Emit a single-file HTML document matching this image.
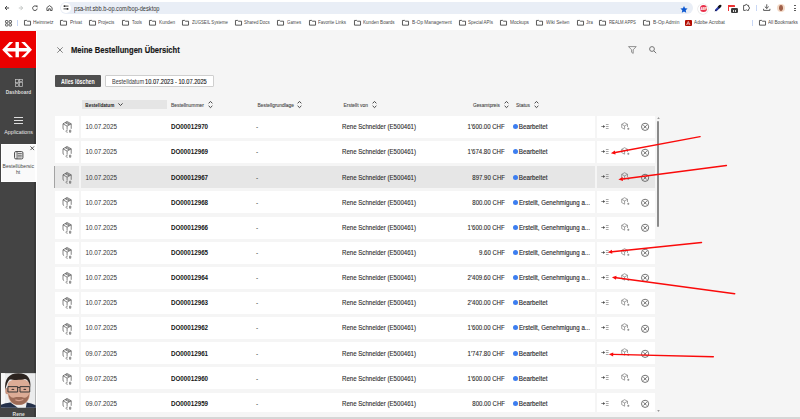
<!DOCTYPE html><html><head><meta charset="utf-8"><style>
*{margin:0;padding:0;box-sizing:border-box}
html,body{width:800px;height:419px;overflow:hidden;background:#fff;font-family:"Liberation Sans", sans-serif}
.a{position:absolute}
.t{position:absolute;white-space:nowrap;line-height:1}
svg{position:absolute;overflow:visible}
</style></head><body>
<div class="a" style="left:0;top:0;width:800px;height:30px;background:#fff"></div>
<svg style="left:4.4px;top:4.9px" width="6" height="6" viewBox="0 0 6 6"><path d="M5.1 3H1M3 1L1 3l2 2" fill="none" stroke="#474747" stroke-width="1"/></svg>
<svg style="left:18.2px;top:4.8px" width="6" height="6" viewBox="0 0 6 6"><path d="M0.8 3H4.6M2.6 0.9L4.7 3 2.6 5.1" fill="none" stroke="#c4c7c5" stroke-width="1"/></svg>
<svg style="left:32px;top:5px" width="6" height="6" viewBox="0 0 6 6"><path d="M5 2.2A2.3 2.3 0 1 0 5.2 3.6" fill="none" stroke="#474747" stroke-width="1"/><path d="M3.6 0.6h1.9v1.9z" fill="#474747"/></svg>
<svg style="left:46px;top:5px" width="7" height="6" viewBox="0 0 7 6"><path d="M0.9 2.6L3.5 0.6 6.1 2.6V5.5H4.3V3.8H2.7V5.5H0.9z" fill="none" stroke="#474747" stroke-width="0.9"/></svg>
<div class="a" style="left:59.7px;top:1.7px;width:633px;height:12.7px;border-radius:6.4px;background:#e9eef6"></div>
<div class="a" style="left:61.2px;top:3.2px;width:9.7px;height:9.7px;border-radius:50%;background:#fff"></div>
<svg style="left:63px;top:5.1px" width="6" height="5" viewBox="0 0 6 5"><path d="M1.8 1.1H5.5M0.5 3.9H4.2" stroke="#1f1f1f" stroke-width="0.8"/><circle cx="1.4" cy="1.1" r="0.9" fill="#1f1f1f"/><circle cx="4.6" cy="3.9" r="0.9" fill="#1f1f1f"/></svg>
<div class="t" style="left:73.8px;top:6px;font-size:6.3px;font-weight:normal;color:#333;transform:scaleX(0.898);transform-origin:0 0">psa-int.sbb.b-op.com/bop-desktop</div>
<svg style="left:679.5px;top:5.5px" width="8" height="7" viewBox="0 0 24 23"><path d="M12 0l3.5 7.6 8.3 0.9-6.2 5.6 1.7 8.2L12 18.1 4.7 22.3l1.7-8.2L0.2 8.5l8.3-0.9z" fill="#0b57d0"/></svg>
<div class="a" style="left:698.3px;top:3.6px;width:10px;height:10px;border-radius:50%;background:#fff;box-shadow:0 0 0 0.6px #e3e3e3"></div>
<div class="a" style="left:699.6px;top:4.9px;width:7.4px;height:7.4px;border-radius:50%;background:#e8304a"></div>
<div class="t" style="left:700.5px;top:8px;font-size:3.2px;font-weight:bold;color:#fff;letter-spacing:-0.1px">ABP</div>
<svg style="left:714px;top:4px" width="8" height="8" viewBox="0 0 8 8"><path d="M2 6.2L5.6 2.6" stroke="#22309a" stroke-width="2.2" stroke-linecap="round"/><path d="M5 3.2L6.3 1.9" stroke="#111" stroke-width="2.4" stroke-linecap="round"/><path d="M2.4 5.2L4.4 3.2" stroke="#5468d8" stroke-width="0.6"/><path d="M0.9 7.1L1.6 6.4" stroke="#111" stroke-width="0.9"/></svg>
<div class="a" style="left:728px;top:4.8px;width:7px;height:6.5px;background:#fff;border-left:1px solid #e33"></div>
<div class="a" style="left:728px;top:4.8px;width:7px;height:2.5px;background:#e33;border-radius:0.6px 0.6px 0 0"></div>
<div class="a" style="left:731px;top:8.3px;width:6.6px;height:5.2px;background:#3c3c3c;border-radius:1.2px"></div>
<div class="a" style="left:732.7px;top:9.5px;width:1.1px;height:2.8px;background:#ddd"></div><div class="a" style="left:734.9px;top:9.5px;width:1.1px;height:2.8px;background:#ddd"></div>
<svg style="left:742.5px;top:4.3px" width="7" height="7" viewBox="0 0 7 7"><path d="M0.6 1.4H2.3A1 1 0 0 1 4.3 1.4H5.6V3A1 1 0 0 1 5.6 5V6.4H4.2A1 1 0 0 0 2.4 6.4H0.6z" fill="none" stroke="#474747" stroke-width="0.9"/></svg>
<div class="a" style="left:755.7px;top:5px;width:0.8px;height:5.5px;background:#c8d7f5"></div>
<svg style="left:763px;top:4.3px" width="7.5" height="7" viewBox="0 0 7.5 7"><path d="M3.75 0.3V4.4M1.8 2.6l1.95 1.9 1.95-1.9M0.6 4.8V6.4H6.9V4.8" fill="none" stroke="#474747" stroke-width="0.9"/></svg>
<div class="a" style="left:777px;top:4px;width:8px;height:8px;border-radius:50%;background:#f3d9c6"></div>
<div class="a" style="left:779.2px;top:5px;width:3.8px;height:6px;border-radius:45%;background:#a0604a"></div>
<div class="a" style="left:794.4px;top:5px;width:1.2px;height:1.2px;background:#474747;border-radius:50%"></div><div class="a" style="left:794.4px;top:7.6px;width:1.2px;height:1.2px;background:#474747;border-radius:50%"></div><div class="a" style="left:794.4px;top:10.2px;width:1.2px;height:1.2px;background:#474747;border-radius:50%"></div>
<svg style="left:5px;top:19.6px" width="7" height="6.5" viewBox="0 0 7 6.5"><g fill="none" stroke="#474747" stroke-width="0.9"><rect x="0.5" y="0.5" width="2.4" height="2.3" rx="0.6"/><rect x="4.1" y="0.5" width="2.4" height="2.3" rx="0.6"/><rect x="0.5" y="3.7" width="2.4" height="2.3" rx="0.6"/><rect x="4.1" y="3.7" width="2.4" height="2.3" rx="0.6"/></g></svg>
<div class="a" style="left:17.2px;top:19.5px;width:0.8px;height:6px;background:#c8d7f5"></div>
<svg style="left:24px;top:20.2px" width="7" height="5.6" viewBox="0 0 7 5.6"><path d="M0.45 0.45H2.7L3.5 1.2H6.55V5.15H0.45z" fill="none" stroke="#474747" stroke-width="0.9" stroke-linejoin="round"/></svg>
<div class="t" style="left:33px;top:21px;font-size:4.9px;font-weight:normal;color:#4a4a4a;transform:scaleX(0.99);transform-origin:0 0">Heimnetz</div>
<svg style="left:60px;top:20.2px" width="7" height="5.6" viewBox="0 0 7 5.6"><path d="M0.45 0.45H2.7L3.5 1.2H6.55V5.15H0.45z" fill="none" stroke="#474747" stroke-width="0.9" stroke-linejoin="round"/></svg>
<div class="t" style="left:70px;top:21px;font-size:4.9px;font-weight:normal;color:#4a4a4a;transform:scaleX(0.957);transform-origin:0 0">Privat</div>
<svg style="left:89px;top:20.2px" width="7" height="5.6" viewBox="0 0 7 5.6"><path d="M0.45 0.45H2.7L3.5 1.2H6.55V5.15H0.45z" fill="none" stroke="#474747" stroke-width="0.9" stroke-linejoin="round"/></svg>
<div class="t" style="left:98px;top:21px;font-size:4.9px;font-weight:normal;color:#4a4a4a;transform:scaleX(0.927);transform-origin:0 0">Projects</div>
<svg style="left:122px;top:20.2px" width="7" height="5.6" viewBox="0 0 7 5.6"><path d="M0.45 0.45H2.7L3.5 1.2H6.55V5.15H0.45z" fill="none" stroke="#474747" stroke-width="0.9" stroke-linejoin="round"/></svg>
<div class="t" style="left:132px;top:21px;font-size:4.9px;font-weight:normal;color:#4a4a4a;transform:scaleX(0.873);transform-origin:0 0">Tools</div>
<svg style="left:149px;top:20.2px" width="7" height="5.6" viewBox="0 0 7 5.6"><path d="M0.45 0.45H2.7L3.5 1.2H6.55V5.15H0.45z" fill="none" stroke="#474747" stroke-width="0.9" stroke-linejoin="round"/></svg>
<div class="t" style="left:159px;top:21px;font-size:4.9px;font-weight:normal;color:#4a4a4a;transform:scaleX(0.961);transform-origin:0 0">Kunden</div>
<svg style="left:182px;top:20.2px" width="7" height="5.6" viewBox="0 0 7 5.6"><path d="M0.45 0.45H2.7L3.5 1.2H6.55V5.15H0.45z" fill="none" stroke="#474747" stroke-width="0.9" stroke-linejoin="round"/></svg>
<div class="t" style="left:191.5px;top:21px;font-size:4.9px;font-weight:normal;color:#4a4a4a;transform:scaleX(0.873);transform-origin:0 0">ZUGSEIL Systeme</div>
<svg style="left:235px;top:20.2px" width="7" height="5.6" viewBox="0 0 7 5.6"><path d="M0.45 0.45H2.7L3.5 1.2H6.55V5.15H0.45z" fill="none" stroke="#474747" stroke-width="0.9" stroke-linejoin="round"/></svg>
<div class="t" style="left:244.4px;top:21px;font-size:4.9px;font-weight:normal;color:#4a4a4a;transform:scaleX(0.912);transform-origin:0 0">Shared Docs</div>
<svg style="left:277px;top:20.2px" width="7" height="5.6" viewBox="0 0 7 5.6"><path d="M0.45 0.45H2.7L3.5 1.2H6.55V5.15H0.45z" fill="none" stroke="#474747" stroke-width="0.9" stroke-linejoin="round"/></svg>
<div class="t" style="left:286.9px;top:21px;font-size:4.9px;font-weight:normal;color:#4a4a4a;transform:scaleX(0.892);transform-origin:0 0">Games</div>
<svg style="left:309px;top:20.2px" width="7" height="5.6" viewBox="0 0 7 5.6"><path d="M0.45 0.45H2.7L3.5 1.2H6.55V5.15H0.45z" fill="none" stroke="#474747" stroke-width="0.9" stroke-linejoin="round"/></svg>
<div class="t" style="left:318.1px;top:21px;font-size:4.9px;font-weight:normal;color:#4a4a4a;transform:scaleX(0.922);transform-origin:0 0">Favorite Links</div>
<svg style="left:354px;top:20.2px" width="7" height="5.6" viewBox="0 0 7 5.6"><path d="M0.45 0.45H2.7L3.5 1.2H6.55V5.15H0.45z" fill="none" stroke="#474747" stroke-width="0.9" stroke-linejoin="round"/></svg>
<div class="t" style="left:363.1px;top:21px;font-size:4.9px;font-weight:normal;color:#4a4a4a;transform:scaleX(0.937);transform-origin:0 0">Kunden Boards</div>
<svg style="left:402px;top:20.2px" width="7" height="5.6" viewBox="0 0 7 5.6"><path d="M0.45 0.45H2.7L3.5 1.2H6.55V5.15H0.45z" fill="none" stroke="#474747" stroke-width="0.9" stroke-linejoin="round"/></svg>
<div class="t" style="left:411.5px;top:21px;font-size:4.9px;font-weight:normal;color:#4a4a4a;transform:scaleX(0.965);transform-origin:0 0">B-Op Management</div>
<svg style="left:459px;top:20.2px" width="7" height="5.6" viewBox="0 0 7 5.6"><path d="M0.45 0.45H2.7L3.5 1.2H6.55V5.15H0.45z" fill="none" stroke="#474747" stroke-width="0.9" stroke-linejoin="round"/></svg>
<div class="t" style="left:468px;top:21px;font-size:4.9px;font-weight:normal;color:#4a4a4a;transform:scaleX(0.912);transform-origin:0 0">Special APIs</div>
<svg style="left:500px;top:20.2px" width="7" height="5.6" viewBox="0 0 7 5.6"><path d="M0.45 0.45H2.7L3.5 1.2H6.55V5.15H0.45z" fill="none" stroke="#474747" stroke-width="0.9" stroke-linejoin="round"/></svg>
<div class="t" style="left:510px;top:21px;font-size:4.9px;font-weight:normal;color:#4a4a4a;transform:scaleX(0.969);transform-origin:0 0">Mockups</div>
<svg style="left:536px;top:20.2px" width="7" height="5.6" viewBox="0 0 7 5.6"><path d="M0.45 0.45H2.7L3.5 1.2H6.55V5.15H0.45z" fill="none" stroke="#474747" stroke-width="0.9" stroke-linejoin="round"/></svg>
<div class="t" style="left:545.5px;top:21px;font-size:4.9px;font-weight:normal;color:#4a4a4a;transform:scaleX(0.959);transform-origin:0 0">Wiki Seiten</div>
<svg style="left:577px;top:20.2px" width="7" height="5.6" viewBox="0 0 7 5.6"><path d="M0.45 0.45H2.7L3.5 1.2H6.55V5.15H0.45z" fill="none" stroke="#474747" stroke-width="0.9" stroke-linejoin="round"/></svg>
<div class="t" style="left:585.6px;top:21px;font-size:4.9px;font-weight:normal;color:#4a4a4a;transform:scaleX(0.873);transform-origin:0 0">Jira</div>
<svg style="left:599px;top:20.2px" width="7" height="5.6" viewBox="0 0 7 5.6"><path d="M0.45 0.45H2.7L3.5 1.2H6.55V5.15H0.45z" fill="none" stroke="#474747" stroke-width="0.9" stroke-linejoin="round"/></svg>
<div class="t" style="left:609px;top:21px;font-size:4.9px;font-weight:normal;color:#4a4a4a;transform:scaleX(0.869);transform-origin:0 0">REALM APPS</div>
<svg style="left:643px;top:20.2px" width="7" height="5.6" viewBox="0 0 7 5.6"><path d="M0.45 0.45H2.7L3.5 1.2H6.55V5.15H0.45z" fill="none" stroke="#474747" stroke-width="0.9" stroke-linejoin="round"/></svg>
<div class="t" style="left:652.5px;top:21px;font-size:4.9px;font-weight:normal;color:#4a4a4a;transform:scaleX(1.002);transform-origin:0 0">B-Op Admin</div>
<div class="a" style="left:685px;top:19.5px;width:6.5px;height:6.5px;background:#b30b00;border-radius:1px"></div>
<svg style="left:686px;top:20.5px" width="4.5" height="4.5" viewBox="0 0 5 5"><path d="M2.5 0.5L0.6 4.4M2.5 0.5L4.4 4.4M1.2 3.2H3.8" stroke="#fff" stroke-width="0.7" fill="none"/></svg>
<div class="t" style="left:694px;top:21px;font-size:4.9px;font-weight:normal;color:#4a4a4a;transform:scaleX(0.963);transform-origin:0 0">Adobe Acrobat</div>
<div class="a" style="left:752px;top:19.5px;width:0.8px;height:6px;background:#c8d7f5"></div>
<svg style="left:759px;top:20.2px" width="7" height="5.6" viewBox="0 0 7 5.6"><path d="M0.45 0.45H2.7L3.5 1.2H6.55V5.15H0.45z" fill="none" stroke="#474747" stroke-width="0.9" stroke-linejoin="round"/></svg>
<div class="t" style="left:768px;top:21px;font-size:4.9px;font-weight:normal;color:#4a4a4a;transform:scaleX(0.957);transform-origin:0 0">All Bookmarks</div>
<div class="a" style="left:0;top:30.3px;width:800px;height:389px;background:#f5f5f5"></div>
<div class="a" style="left:0;top:30.5px;width:37px;height:387px;background:#fff"></div>
<div class="a" style="left:0;top:30.5px;width:35.8px;height:37.8px;background:#eb0000"></div>
<div class="a" style="left:0;top:68.3px;width:35.8px;height:349px;background:#444"></div>
<div class="a" style="left:34px;top:68.3px;width:1.8px;height:349px;background:#3a3a3a"></div>
<svg style="left:0;top:0" width="36" height="60" viewBox="0 0 36 60"><path fill="#fff" d="M9.5 42H13.2L7.2 48H15.5V42H18.9V48H27.2L21.2 42H24.9L32 49.7 24.9 57.3H21.2L27.2 51.4H18.9V57.3H15.5V51.4H7.2L13.2 57.3H9.5L2.2 49.7z"/></svg>
<svg style="left:14.6px;top:79px" width="8" height="8" viewBox="0 0 8 8"><g fill="none" stroke="#c8c8c8" stroke-width="0.7"><rect x="0.5" y="0.5" width="3" height="3.2"/><rect x="4.5" y="0.5" width="3" height="1.8"/><rect x="0.5" y="4.7" width="3" height="2.8"/><rect x="4.5" y="3.3" width="3" height="4.2"/></g></svg>
<div class="t" style="left:5.8px;top:90.7px;font-size:4.8px;font-weight:bold;color:#dcdcdc;letter-spacing:0.05px">Dashboard</div>
<div class="a" style="left:13.8px;top:117.2px;width:9px;height:0.9px;background:#ddd"></div><div class="a" style="left:13.8px;top:119.9px;width:9px;height:0.9px;background:#ddd"></div><div class="a" style="left:13.8px;top:122.6px;width:9px;height:0.9px;background:#ddd"></div>
<div class="t" style="left:4.3px;top:130px;font-size:5.3px;color:#e8e8e8">Applications</div>
<div class="a" style="left:1px;top:143.8px;width:34.8px;height:38px;background:#fafafa;border:1.5px solid #fff"></div>
<svg style="left:30px;top:146px" width="4.5" height="4.5" viewBox="0 0 4.5 4.5"><path d="M0.4 0.4l3.7 3.7M4.1 0.4L0.4 4.1" stroke="#333" stroke-width="0.8"/></svg>
<svg style="left:14px;top:151px" width="9.5" height="8.5" viewBox="0 0 9.5 8.5"><rect x="0.6" y="0.6" width="8.3" height="7.3" rx="1.2" fill="none" stroke="#444" stroke-width="1"/><path d="M3 0.6V7.9M3.6 2.6h4.2M3.6 4.25h4.2M3.6 5.9h4.2" stroke="#444" stroke-width="0.8"/></svg>
<div class="t" style="left:2.6px;top:163.7px;font-size:5.05px;color:#444">Bestellübersic</div>
<div class="t" style="left:16px;top:170.3px;font-size:5.05px;color:#444">ht</div>
<svg style="left:1px;top:373.4px" width="34.7" height="35" viewBox="0 0 35 35">
<rect width="35" height="35" fill="#ebeced"/>
<rect width="4" height="35" fill="#f7f7f7"/>
<path d="M0 35V32C3 30.5 6 30 9 29.5L26 29.5C29 30 32 31 35 32.5V35z" fill="#25314a"/>
<path d="M9.5 29.5L17 35 25 35 26 29.5z" fill="#eeeeee"/>
<ellipse cx="6.2" cy="18" rx="1.9" ry="3.2" fill="#c9947e"/>
<path d="M6.8 12C6.8 4 29.2 4 29.2 12V20C29.2 28 24.5 32 18 32C11.5 32 6.8 28 6.8 20z" fill="#dcac96"/>
<path d="M4.4 17C3 6 8 0 17.5 0C27 0 30.5 5 29.6 14.5C28.6 9 27 6.6 24 6C20 7.2 12 7 8.8 6.4C7 8 5.5 11.5 4.4 17z" fill="#2c2420"/>
<path d="M7.5 20C7.8 28 12 32 18 32C24 32 28.3 28 28.6 20C27.6 24 25 25.3 22.5 24.6C20.5 24 15.5 24 13.5 24.6C11 25.3 8.6 24 7.5 20z" fill="#9c6b57"/>
<path d="M14.5 26.8C16.5 27.8 20 27.8 22.5 26.6" stroke="#d7a291" stroke-width="1.2" fill="none"/>
<path d="M7 13.6H16.8V19H7zM19.2 13.6H29V19H19.2zM16.8 14.4H19.2" fill="none" stroke="#353535" stroke-width="1" stroke-linejoin="round"/>
<ellipse cx="12" cy="16.4" rx="1.5" ry="0.7" fill="#4a3a34"/><ellipse cx="24" cy="16.4" rx="1.5" ry="0.7" fill="#4a3a34"/>
</svg>
<div class="t" style="left:12.6px;top:411.6px;font-size:5px;font-weight:bold;color:#ddd">Rene</div>
<div class="a" style="left:0;top:417px;width:800px;height:2px;background:#d6d6d6"></div>
<svg style="left:56.5px;top:47px" width="6" height="6" viewBox="0 0 6 6"><path d="M0.3 0.3l5.4 5.4M5.7 0.3L0.3 5.7" stroke="#666" stroke-width="0.8"/></svg>
<div class="t" style="left:70.6px;top:45.7px;font-size:8.3px;font-weight:bold;color:#151515;-webkit-text-stroke:0.15px #151515;transform:scaleX(0.918);transform-origin:0 0">Meine Bestellungen Übersicht</div>
<svg style="left:628.4px;top:46px" width="9" height="8" viewBox="0 0 9 8"><path d="M0.5 0.6H8.2L5.2 3.8V7.4L3.6 6.3V3.8z" fill="none" stroke="#777" stroke-width="0.8" stroke-linejoin="round"/></svg>
<svg style="left:649px;top:46px" width="8" height="8" viewBox="0 0 8 8"><circle cx="3" cy="3" r="2.4" fill="none" stroke="#666" stroke-width="0.9"/><path d="M4.8 4.8L7.2 7.2" stroke="#666" stroke-width="0.9"/></svg>
<div class="a" style="left:55px;top:75px;width:46px;height:12.2px;background:#4f4f4f;border-radius:1px"></div>
<div class="t" style="left:61px;top:79px;font-size:6.3px;font-weight:bold;color:#fff;transform:scaleX(0.83);transform-origin:0 0">Alles löschen</div>
<div class="a" style="left:104.5px;top:74.6px;width:109.4px;height:12.9px;background:#fff;border:0.7px solid #cfcfcf;border-radius:1px"></div>
<div class="t" style="left:111.5px;top:79px;font-size:6.3px;font-weight:normal;color:#3a3a3a;transform:scaleX(0.88);transform-origin:0 0">Bestelldatum</div>
<div class="t" style="left:145.2px;top:79px;font-size:6.3px;font-weight:normal;color:#1a1a1a;transform:scaleX(0.9);transform-origin:0 0;-webkit-text-stroke:0.12px #1a1a1a">10.07.2023 - 10.07.2025</div>
<div class="a" style="left:82.2px;top:100px;width:84.5px;height:9.4px;background:#e5e5e5"></div>
<div class="t" style="left:85.3px;top:103.6px;font-size:4.62px;font-weight:bold;color:#222">Bestelldatum</div>
<svg style="left:118.2px;top:103.2px" width="5" height="3" viewBox="0 0 5 3"><path d="M0.4 0.4L2.5 2.5 4.6 0.4" fill="none" stroke="#333" stroke-width="0.9"/></svg>
<div class="t" style="left:171px;top:103.9px;font-size:4.95px;color:#444;-webkit-text-stroke:0.08px #444">Bestellnummer</div>
<svg style="left:208.2px;top:101.4px" width="5" height="7" viewBox="0 0 5 7"><path d="M0.6 2.3L2.5 0.5 4.4 2.3M0.6 4.8L2.5 6.6 4.4 4.8" fill="none" stroke="#333" stroke-width="0.9"/></svg>
<div class="t" style="left:257.5px;top:103.9px;font-size:4.9px;color:#444;-webkit-text-stroke:0.08px #444">Bestellgrundlage</div>
<svg style="left:297.2px;top:101.4px" width="5" height="7" viewBox="0 0 5 7"><path d="M0.6 2.3L2.5 0.5 4.4 2.3M0.6 4.8L2.5 6.6 4.4 4.8" fill="none" stroke="#333" stroke-width="0.9"/></svg>
<div class="t" style="left:343.5px;top:103.9px;font-size:4.95px;color:#444;-webkit-text-stroke:0.08px #444">Erstellt von</div>
<svg style="left:371.7px;top:101.4px" width="5" height="7" viewBox="0 0 5 7"><path d="M0.6 2.3L2.5 0.5 4.4 2.3M0.6 4.8L2.5 6.6 4.4 4.8" fill="none" stroke="#333" stroke-width="0.9"/></svg>
<div class="t" style="left:473px;top:103.9px;font-size:4.76px;color:#444;-webkit-text-stroke:0.08px #444">Gesamtpreis</div>
<svg style="left:503.9px;top:101.4px" width="5" height="7" viewBox="0 0 5 7"><path d="M0.6 2.3L2.5 0.5 4.4 2.3M0.6 4.8L2.5 6.6 4.4 4.8" fill="none" stroke="#333" stroke-width="0.9"/></svg>
<div class="t" style="left:516px;top:103.9px;font-size:4.94px;color:#444;-webkit-text-stroke:0.08px #444">Status</div>
<svg style="left:533.9000000000001px;top:101.4px" width="5" height="7" viewBox="0 0 5 7"><path d="M0.6 2.3L2.5 0.5 4.4 2.3M0.6 4.8L2.5 6.6 4.4 4.8" fill="none" stroke="#333" stroke-width="0.9"/></svg>
<div class="a" style="left:55.3px;top:115.90px;width:23.8px;height:22.0px;background:#fff"></div>
<div class="a" style="left:81px;top:115.90px;width:513.6px;height:22.0px;background:#fff"></div>
<div class="a" style="left:596.9px;top:115.90px;width:57.9px;height:22.0px;background:#fff"></div>
<svg style="left:62px;top:121.30px" width="10.5" height="12.5" viewBox="0 0 10.5 12.5"><path d="M5.1 0.5L9.2 2.8V7.8M5.1 0.5L1 2.8V7.8L2.1 8.6M1 2.8L5.1 5.1 9.2 2.8M5.1 5.1V8.4M3.05 1.65L7.15 3.95M4.1 1.05L8.2 3.35" fill="none" stroke="#4d4d4d" stroke-width="0.7" stroke-linejoin="round"/><path d="M5.8 9.3A1.05 1.2 0 1 0 5.8 11.1" fill="none" stroke="#555" stroke-width="0.6"/><path d="M7.6 9V11.4H8.4A0.62 0.6 0 0 0 8.4 10.2H7.6M7.6 10.2H8.3A0.6 0.6 0 0 0 8.3 9H7.6" fill="none" stroke="#555" stroke-width="0.55"/></svg>
<div class="t" style="left:85.6px;top:124px;font-size:6.3px;font-weight:normal;color:#333">10.07.2025</div>
<div class="t" style="left:170.9px;top:124px;font-size:6.3px;font-weight:bold;color:#151515;transform:scaleX(0.99);transform-origin:0 0">DO00012970</div>
<div class="t" style="left:256px;top:124px;font-size:6.5px;font-weight:normal;color:#333">-</div>
<div class="t" style="left:342px;top:124px;font-size:6.3px;font-weight:normal;color:#2b2b2b;transform:scaleX(0.97);transform-origin:0 0;-webkit-text-stroke:0.1px #2b2b2b">Rene Schneider (E500461)</div>
<div class="t" style="right:295.5px;top:124px;font-size:6.3px;font-weight:normal;color:#2b2b2b;transform:scaleX(0.96);transform-origin:100% 0;-webkit-text-stroke:0.1px #2b2b2b">1'600.00 CHF</div>
<div class="a" style="left:512.5px;top:124.25px;width:5px;height:5px;border-radius:50%;background:#3d7ef0"></div>
<div class="t" style="left:518.8px;top:124px;font-size:6.3px;font-weight:normal;color:#2b2b2b;-webkit-text-stroke:0.13px #2b2b2b">Bearbeitet</div>
<svg style="left:601.3px;top:123px" width="8" height="7" viewBox="0 0 8 7"><path d="M0.3 3.5H3" fill="none" stroke="#555" stroke-width="0.7"/><path d="M2.2 2.1L4.1 3.5 2.2 4.9z" fill="#444"/><path d="M4.9 1.5H7.6M4.9 3.5H7.6M4.9 5.5H7.6" stroke="#7a7a7a" stroke-width="0.65"/></svg>
<svg style="left:620.5px;top:121.90px" width="9" height="8.5" viewBox="0 0 9 8.5"><path d="M3.6 0.7L6.5 2.3V5M3.6 0.7L0.7 2.3V5.6L3.6 7.2M0.7 2.3L3.6 3.9 6.5 2.3M3.6 3.9V7.2" fill="none" stroke="#666" stroke-width="0.6" stroke-linejoin="round"/><path d="M7.3 5.7V7.9M6.2 6.8H8.4" stroke="#666" stroke-width="0.6"/></svg>
<svg style="left:641.3px;top:123.40px" width="8.2" height="7.7" viewBox="0 0 8.2 7.7"><circle cx="4.1" cy="3.85" r="3.6" fill="none" stroke="#444" stroke-width="0.75"/><path d="M2.4 2.15L5.8 5.55M5.8 2.15L2.4 5.55" stroke="#444" stroke-width="0.75"/></svg>
<div class="a" style="left:55.3px;top:141.05px;width:23.8px;height:22.0px;background:#fff"></div>
<div class="a" style="left:81px;top:141.05px;width:513.6px;height:22.0px;background:#fff"></div>
<div class="a" style="left:596.9px;top:141.05px;width:57.9px;height:22.0px;background:#fff"></div>
<svg style="left:62px;top:146.45px" width="10.5" height="12.5" viewBox="0 0 10.5 12.5"><path d="M5.1 0.5L9.2 2.8V7.8M5.1 0.5L1 2.8V7.8L2.1 8.6M1 2.8L5.1 5.1 9.2 2.8M5.1 5.1V8.4M3.05 1.65L7.15 3.95M4.1 1.05L8.2 3.35" fill="none" stroke="#4d4d4d" stroke-width="0.7" stroke-linejoin="round"/><path d="M5.8 9.3A1.05 1.2 0 1 0 5.8 11.1" fill="none" stroke="#555" stroke-width="0.6"/><path d="M7.6 9V11.4H8.4A0.62 0.6 0 0 0 8.4 10.2H7.6M7.6 10.2H8.3A0.6 0.6 0 0 0 8.3 9H7.6" fill="none" stroke="#555" stroke-width="0.55"/></svg>
<div class="t" style="left:85.6px;top:149px;font-size:6.3px;font-weight:normal;color:#333">10.07.2025</div>
<div class="t" style="left:170.9px;top:149px;font-size:6.3px;font-weight:bold;color:#151515;transform:scaleX(0.99);transform-origin:0 0">DO00012969</div>
<div class="t" style="left:256px;top:149px;font-size:6.5px;font-weight:normal;color:#333">-</div>
<div class="t" style="left:342px;top:149px;font-size:6.3px;font-weight:normal;color:#2b2b2b;transform:scaleX(0.97);transform-origin:0 0;-webkit-text-stroke:0.1px #2b2b2b">Rene Schneider (E500461)</div>
<div class="t" style="right:295.5px;top:149px;font-size:6.3px;font-weight:normal;color:#2b2b2b;transform:scaleX(0.96);transform-origin:100% 0;-webkit-text-stroke:0.1px #2b2b2b">1'674.80 CHF</div>
<div class="a" style="left:512.5px;top:149.40px;width:5px;height:5px;border-radius:50%;background:#3d7ef0"></div>
<div class="t" style="left:518.8px;top:149px;font-size:6.3px;font-weight:normal;color:#2b2b2b;-webkit-text-stroke:0.13px #2b2b2b">Bearbeitet</div>
<svg style="left:601.3px;top:148px" width="8" height="7" viewBox="0 0 8 7"><path d="M0.3 3.5H3" fill="none" stroke="#555" stroke-width="0.7"/><path d="M2.2 2.1L4.1 3.5 2.2 4.9z" fill="#444"/><path d="M4.9 1.5H7.6M4.9 3.5H7.6M4.9 5.5H7.6" stroke="#7a7a7a" stroke-width="0.65"/></svg>
<svg style="left:620.5px;top:147.05px" width="9" height="8.5" viewBox="0 0 9 8.5"><path d="M3.6 0.7L6.5 2.3V5M3.6 0.7L0.7 2.3V5.6L3.6 7.2M0.7 2.3L3.6 3.9 6.5 2.3M3.6 3.9V7.2" fill="none" stroke="#666" stroke-width="0.6" stroke-linejoin="round"/><path d="M7.3 5.7V7.9M6.2 6.8H8.4" stroke="#666" stroke-width="0.6"/></svg>
<svg style="left:641.3px;top:148.55px" width="8.2" height="7.7" viewBox="0 0 8.2 7.7"><circle cx="4.1" cy="3.85" r="3.6" fill="none" stroke="#444" stroke-width="0.75"/><path d="M2.4 2.15L5.8 5.55M5.8 2.15L2.4 5.55" stroke="#444" stroke-width="0.75"/></svg>
<div class="a" style="left:54px;top:166.20px;width:1.4px;height:22.0px;background:#a3a3a3"></div>
<div class="a" style="left:55.3px;top:166.20px;width:23.8px;height:22.0px;background:#e6e6e6"></div>
<div class="a" style="left:81px;top:166.20px;width:513.6px;height:22.0px;background:#e6e6e6"></div>
<div class="a" style="left:596.9px;top:166.20px;width:57.9px;height:22.0px;background:#e6e6e6"></div>
<svg style="left:62px;top:171.60px" width="10.5" height="12.5" viewBox="0 0 10.5 12.5"><path d="M5.1 0.5L9.2 2.8V7.8M5.1 0.5L1 2.8V7.8L2.1 8.6M1 2.8L5.1 5.1 9.2 2.8M5.1 5.1V8.4M3.05 1.65L7.15 3.95M4.1 1.05L8.2 3.35" fill="none" stroke="#4d4d4d" stroke-width="0.7" stroke-linejoin="round"/><path d="M5.8 9.3A1.05 1.2 0 1 0 5.8 11.1" fill="none" stroke="#555" stroke-width="0.6"/><path d="M7.6 9V11.4H8.4A0.62 0.6 0 0 0 8.4 10.2H7.6M7.6 10.2H8.3A0.6 0.6 0 0 0 8.3 9H7.6" fill="none" stroke="#555" stroke-width="0.55"/></svg>
<div class="t" style="left:85.6px;top:175px;font-size:6.3px;font-weight:normal;color:#333">10.07.2025</div>
<div class="t" style="left:170.9px;top:175px;font-size:6.3px;font-weight:bold;color:#151515;transform:scaleX(0.99);transform-origin:0 0">DO00012967</div>
<div class="t" style="left:256px;top:175px;font-size:6.5px;font-weight:normal;color:#333">-</div>
<div class="t" style="left:342px;top:175px;font-size:6.3px;font-weight:normal;color:#2b2b2b;transform:scaleX(0.97);transform-origin:0 0;-webkit-text-stroke:0.1px #2b2b2b">Rene Schneider (E500461)</div>
<div class="t" style="right:295.5px;top:175px;font-size:6.3px;font-weight:normal;color:#2b2b2b;transform:scaleX(0.96);transform-origin:100% 0;-webkit-text-stroke:0.1px #2b2b2b">897.90 CHF</div>
<div class="a" style="left:512.5px;top:174.55px;width:5px;height:5px;border-radius:50%;background:#3d7ef0"></div>
<div class="t" style="left:518.8px;top:175px;font-size:6.3px;font-weight:normal;color:#2b2b2b;-webkit-text-stroke:0.13px #2b2b2b">Bearbeitet</div>
<svg style="left:601.3px;top:173px" width="8" height="7" viewBox="0 0 8 7"><path d="M0.3 3.5H3" fill="none" stroke="#555" stroke-width="0.7"/><path d="M2.2 2.1L4.1 3.5 2.2 4.9z" fill="#444"/><path d="M4.9 1.5H7.6M4.9 3.5H7.6M4.9 5.5H7.6" stroke="#7a7a7a" stroke-width="0.65"/></svg>
<svg style="left:620.5px;top:172.20px" width="9" height="8.5" viewBox="0 0 9 8.5"><path d="M3.6 0.7L6.5 2.3V5M3.6 0.7L0.7 2.3V5.6L3.6 7.2M0.7 2.3L3.6 3.9 6.5 2.3M3.6 3.9V7.2" fill="none" stroke="#666" stroke-width="0.6" stroke-linejoin="round"/><path d="M7.3 5.7V7.9M6.2 6.8H8.4" stroke="#666" stroke-width="0.6"/></svg>
<svg style="left:641.3px;top:173.70px" width="8.2" height="7.7" viewBox="0 0 8.2 7.7"><circle cx="4.1" cy="3.85" r="3.6" fill="none" stroke="#444" stroke-width="0.75"/><path d="M2.4 2.15L5.8 5.55M5.8 2.15L2.4 5.55" stroke="#444" stroke-width="0.75"/></svg>
<div class="a" style="left:55.3px;top:191.35px;width:23.8px;height:22.0px;background:#fff"></div>
<div class="a" style="left:81px;top:191.35px;width:513.6px;height:22.0px;background:#fff"></div>
<div class="a" style="left:596.9px;top:191.35px;width:57.9px;height:22.0px;background:#fff"></div>
<svg style="left:62px;top:196.75px" width="10.5" height="12.5" viewBox="0 0 10.5 12.5"><path d="M5.1 0.5L9.2 2.8V7.8M5.1 0.5L1 2.8V7.8L2.1 8.6M1 2.8L5.1 5.1 9.2 2.8M5.1 5.1V8.4M3.05 1.65L7.15 3.95M4.1 1.05L8.2 3.35" fill="none" stroke="#4d4d4d" stroke-width="0.7" stroke-linejoin="round"/><path d="M5.8 9.3A1.05 1.2 0 1 0 5.8 11.1" fill="none" stroke="#555" stroke-width="0.6"/><path d="M7.6 9V11.4H8.4A0.62 0.6 0 0 0 8.4 10.2H7.6M7.6 10.2H8.3A0.6 0.6 0 0 0 8.3 9H7.6" fill="none" stroke="#555" stroke-width="0.55"/></svg>
<div class="t" style="left:85.6px;top:200px;font-size:6.3px;font-weight:normal;color:#333">10.07.2025</div>
<div class="t" style="left:170.9px;top:200px;font-size:6.3px;font-weight:bold;color:#151515;transform:scaleX(0.99);transform-origin:0 0">DO00012968</div>
<div class="t" style="left:256px;top:200px;font-size:6.5px;font-weight:normal;color:#333">-</div>
<div class="t" style="left:342px;top:200px;font-size:6.3px;font-weight:normal;color:#2b2b2b;transform:scaleX(0.97);transform-origin:0 0;-webkit-text-stroke:0.1px #2b2b2b">Rene Schneider (E500461)</div>
<div class="t" style="right:295.5px;top:200px;font-size:6.3px;font-weight:normal;color:#2b2b2b;transform:scaleX(0.96);transform-origin:100% 0;-webkit-text-stroke:0.1px #2b2b2b">800.00 CHF</div>
<div class="a" style="left:512.5px;top:199.70px;width:5px;height:5px;border-radius:50%;background:#3d7ef0"></div>
<div class="t" style="left:518.8px;top:200px;font-size:6.3px;font-weight:normal;color:#2b2b2b;transform:scaleX(0.974);transform-origin:0 0;-webkit-text-stroke:0.13px #2b2b2b">Erstellt, Genehmigung a...</div>
<svg style="left:601.3px;top:198px" width="8" height="7" viewBox="0 0 8 7"><path d="M0.3 3.5H3" fill="none" stroke="#555" stroke-width="0.7"/><path d="M2.2 2.1L4.1 3.5 2.2 4.9z" fill="#444"/><path d="M4.9 1.5H7.6M4.9 3.5H7.6M4.9 5.5H7.6" stroke="#7a7a7a" stroke-width="0.65"/></svg>
<svg style="left:620.5px;top:197.35px" width="9" height="8.5" viewBox="0 0 9 8.5"><path d="M3.6 0.7L6.5 2.3V5M3.6 0.7L0.7 2.3V5.6L3.6 7.2M0.7 2.3L3.6 3.9 6.5 2.3M3.6 3.9V7.2" fill="none" stroke="#666" stroke-width="0.6" stroke-linejoin="round"/><path d="M7.3 5.7V7.9M6.2 6.8H8.4" stroke="#666" stroke-width="0.6"/></svg>
<svg style="left:641.3px;top:198.85px" width="8.2" height="7.7" viewBox="0 0 8.2 7.7"><circle cx="4.1" cy="3.85" r="3.6" fill="none" stroke="#444" stroke-width="0.75"/><path d="M2.4 2.15L5.8 5.55M5.8 2.15L2.4 5.55" stroke="#444" stroke-width="0.75"/></svg>
<div class="a" style="left:55.3px;top:216.50px;width:23.8px;height:22.0px;background:#fff"></div>
<div class="a" style="left:81px;top:216.50px;width:513.6px;height:22.0px;background:#fff"></div>
<div class="a" style="left:596.9px;top:216.50px;width:57.9px;height:22.0px;background:#fff"></div>
<svg style="left:62px;top:221.90px" width="10.5" height="12.5" viewBox="0 0 10.5 12.5"><path d="M5.1 0.5L9.2 2.8V7.8M5.1 0.5L1 2.8V7.8L2.1 8.6M1 2.8L5.1 5.1 9.2 2.8M5.1 5.1V8.4M3.05 1.65L7.15 3.95M4.1 1.05L8.2 3.35" fill="none" stroke="#4d4d4d" stroke-width="0.7" stroke-linejoin="round"/><path d="M5.8 9.3A1.05 1.2 0 1 0 5.8 11.1" fill="none" stroke="#555" stroke-width="0.6"/><path d="M7.6 9V11.4H8.4A0.62 0.6 0 0 0 8.4 10.2H7.6M7.6 10.2H8.3A0.6 0.6 0 0 0 8.3 9H7.6" fill="none" stroke="#555" stroke-width="0.55"/></svg>
<div class="t" style="left:85.6px;top:225px;font-size:6.3px;font-weight:normal;color:#333">10.07.2025</div>
<div class="t" style="left:170.9px;top:225px;font-size:6.3px;font-weight:bold;color:#151515;transform:scaleX(0.99);transform-origin:0 0">DO00012966</div>
<div class="t" style="left:256px;top:225px;font-size:6.5px;font-weight:normal;color:#333">-</div>
<div class="t" style="left:342px;top:225px;font-size:6.3px;font-weight:normal;color:#2b2b2b;transform:scaleX(0.97);transform-origin:0 0;-webkit-text-stroke:0.1px #2b2b2b">Rene Schneider (E500461)</div>
<div class="t" style="right:295.5px;top:225px;font-size:6.3px;font-weight:normal;color:#2b2b2b;transform:scaleX(0.96);transform-origin:100% 0;-webkit-text-stroke:0.1px #2b2b2b">1'600.00 CHF</div>
<div class="a" style="left:512.5px;top:224.85px;width:5px;height:5px;border-radius:50%;background:#3d7ef0"></div>
<div class="t" style="left:518.8px;top:225px;font-size:6.3px;font-weight:normal;color:#2b2b2b;transform:scaleX(0.974);transform-origin:0 0;-webkit-text-stroke:0.13px #2b2b2b">Erstellt, Genehmigung a...</div>
<svg style="left:601.3px;top:224px" width="8" height="7" viewBox="0 0 8 7"><path d="M0.3 3.5H3" fill="none" stroke="#555" stroke-width="0.7"/><path d="M2.2 2.1L4.1 3.5 2.2 4.9z" fill="#444"/><path d="M4.9 1.5H7.6M4.9 3.5H7.6M4.9 5.5H7.6" stroke="#7a7a7a" stroke-width="0.65"/></svg>
<svg style="left:620.5px;top:222.50px" width="9" height="8.5" viewBox="0 0 9 8.5"><path d="M3.6 0.7L6.5 2.3V5M3.6 0.7L0.7 2.3V5.6L3.6 7.2M0.7 2.3L3.6 3.9 6.5 2.3M3.6 3.9V7.2" fill="none" stroke="#666" stroke-width="0.6" stroke-linejoin="round"/><path d="M7.3 5.7V7.9M6.2 6.8H8.4" stroke="#666" stroke-width="0.6"/></svg>
<svg style="left:641.3px;top:224.00px" width="8.2" height="7.7" viewBox="0 0 8.2 7.7"><circle cx="4.1" cy="3.85" r="3.6" fill="none" stroke="#444" stroke-width="0.75"/><path d="M2.4 2.15L5.8 5.55M5.8 2.15L2.4 5.55" stroke="#444" stroke-width="0.75"/></svg>
<div class="a" style="left:55.3px;top:241.65px;width:23.8px;height:22.0px;background:#fff"></div>
<div class="a" style="left:81px;top:241.65px;width:513.6px;height:22.0px;background:#fff"></div>
<div class="a" style="left:596.9px;top:241.65px;width:57.9px;height:22.0px;background:#fff"></div>
<svg style="left:62px;top:247.05px" width="10.5" height="12.5" viewBox="0 0 10.5 12.5"><path d="M5.1 0.5L9.2 2.8V7.8M5.1 0.5L1 2.8V7.8L2.1 8.6M1 2.8L5.1 5.1 9.2 2.8M5.1 5.1V8.4M3.05 1.65L7.15 3.95M4.1 1.05L8.2 3.35" fill="none" stroke="#4d4d4d" stroke-width="0.7" stroke-linejoin="round"/><path d="M5.8 9.3A1.05 1.2 0 1 0 5.8 11.1" fill="none" stroke="#555" stroke-width="0.6"/><path d="M7.6 9V11.4H8.4A0.62 0.6 0 0 0 8.4 10.2H7.6M7.6 10.2H8.3A0.6 0.6 0 0 0 8.3 9H7.6" fill="none" stroke="#555" stroke-width="0.55"/></svg>
<div class="t" style="left:85.6px;top:250px;font-size:6.3px;font-weight:normal;color:#333">10.07.2025</div>
<div class="t" style="left:170.9px;top:250px;font-size:6.3px;font-weight:bold;color:#151515;transform:scaleX(0.99);transform-origin:0 0">DO00012965</div>
<div class="t" style="left:256px;top:250px;font-size:6.5px;font-weight:normal;color:#333">-</div>
<div class="t" style="left:342px;top:250px;font-size:6.3px;font-weight:normal;color:#2b2b2b;transform:scaleX(0.97);transform-origin:0 0;-webkit-text-stroke:0.1px #2b2b2b">Rene Schneider (E500461)</div>
<div class="t" style="right:295.5px;top:250px;font-size:6.3px;font-weight:normal;color:#2b2b2b;transform:scaleX(0.96);transform-origin:100% 0;-webkit-text-stroke:0.1px #2b2b2b">9.60 CHF</div>
<div class="a" style="left:512.5px;top:250.00px;width:5px;height:5px;border-radius:50%;background:#3d7ef0"></div>
<div class="t" style="left:518.8px;top:250px;font-size:6.3px;font-weight:normal;color:#2b2b2b;transform:scaleX(0.974);transform-origin:0 0;-webkit-text-stroke:0.13px #2b2b2b">Erstellt, Genehmigung a...</div>
<svg style="left:601.3px;top:249px" width="8" height="7" viewBox="0 0 8 7"><path d="M0.3 3.5H3" fill="none" stroke="#555" stroke-width="0.7"/><path d="M2.2 2.1L4.1 3.5 2.2 4.9z" fill="#444"/><path d="M4.9 1.5H7.6M4.9 3.5H7.6M4.9 5.5H7.6" stroke="#7a7a7a" stroke-width="0.65"/></svg>
<svg style="left:620.5px;top:247.65px" width="9" height="8.5" viewBox="0 0 9 8.5"><path d="M3.6 0.7L6.5 2.3V5M3.6 0.7L0.7 2.3V5.6L3.6 7.2M0.7 2.3L3.6 3.9 6.5 2.3M3.6 3.9V7.2" fill="none" stroke="#666" stroke-width="0.6" stroke-linejoin="round"/><path d="M7.3 5.7V7.9M6.2 6.8H8.4" stroke="#666" stroke-width="0.6"/></svg>
<svg style="left:641.3px;top:249.15px" width="8.2" height="7.7" viewBox="0 0 8.2 7.7"><circle cx="4.1" cy="3.85" r="3.6" fill="none" stroke="#444" stroke-width="0.75"/><path d="M2.4 2.15L5.8 5.55M5.8 2.15L2.4 5.55" stroke="#444" stroke-width="0.75"/></svg>
<div class="a" style="left:55.3px;top:266.80px;width:23.8px;height:22.0px;background:#fff"></div>
<div class="a" style="left:81px;top:266.80px;width:513.6px;height:22.0px;background:#fff"></div>
<div class="a" style="left:596.9px;top:266.80px;width:57.9px;height:22.0px;background:#fff"></div>
<svg style="left:62px;top:272.20px" width="10.5" height="12.5" viewBox="0 0 10.5 12.5"><path d="M5.1 0.5L9.2 2.8V7.8M5.1 0.5L1 2.8V7.8L2.1 8.6M1 2.8L5.1 5.1 9.2 2.8M5.1 5.1V8.4M3.05 1.65L7.15 3.95M4.1 1.05L8.2 3.35" fill="none" stroke="#4d4d4d" stroke-width="0.7" stroke-linejoin="round"/><path d="M5.8 9.3A1.05 1.2 0 1 0 5.8 11.1" fill="none" stroke="#555" stroke-width="0.6"/><path d="M7.6 9V11.4H8.4A0.62 0.6 0 0 0 8.4 10.2H7.6M7.6 10.2H8.3A0.6 0.6 0 0 0 8.3 9H7.6" fill="none" stroke="#555" stroke-width="0.55"/></svg>
<div class="t" style="left:85.6px;top:275px;font-size:6.3px;font-weight:normal;color:#333">10.07.2025</div>
<div class="t" style="left:170.9px;top:275px;font-size:6.3px;font-weight:bold;color:#151515;transform:scaleX(0.99);transform-origin:0 0">DO00012964</div>
<div class="t" style="left:256px;top:275px;font-size:6.5px;font-weight:normal;color:#333">-</div>
<div class="t" style="left:342px;top:275px;font-size:6.3px;font-weight:normal;color:#2b2b2b;transform:scaleX(0.97);transform-origin:0 0;-webkit-text-stroke:0.1px #2b2b2b">Rene Schneider (E500461)</div>
<div class="t" style="right:295.5px;top:275px;font-size:6.3px;font-weight:normal;color:#2b2b2b;transform:scaleX(0.96);transform-origin:100% 0;-webkit-text-stroke:0.1px #2b2b2b">2'409.60 CHF</div>
<div class="a" style="left:512.5px;top:275.15px;width:5px;height:5px;border-radius:50%;background:#3d7ef0"></div>
<div class="t" style="left:518.8px;top:275px;font-size:6.3px;font-weight:normal;color:#2b2b2b;transform:scaleX(0.974);transform-origin:0 0;-webkit-text-stroke:0.13px #2b2b2b">Erstellt, Genehmigung a...</div>
<svg style="left:601.3px;top:274px" width="8" height="7" viewBox="0 0 8 7"><path d="M0.3 3.5H3" fill="none" stroke="#555" stroke-width="0.7"/><path d="M2.2 2.1L4.1 3.5 2.2 4.9z" fill="#444"/><path d="M4.9 1.5H7.6M4.9 3.5H7.6M4.9 5.5H7.6" stroke="#7a7a7a" stroke-width="0.65"/></svg>
<svg style="left:620.5px;top:272.80px" width="9" height="8.5" viewBox="0 0 9 8.5"><path d="M3.6 0.7L6.5 2.3V5M3.6 0.7L0.7 2.3V5.6L3.6 7.2M0.7 2.3L3.6 3.9 6.5 2.3M3.6 3.9V7.2" fill="none" stroke="#666" stroke-width="0.6" stroke-linejoin="round"/><path d="M7.3 5.7V7.9M6.2 6.8H8.4" stroke="#666" stroke-width="0.6"/></svg>
<svg style="left:641.3px;top:274.30px" width="8.2" height="7.7" viewBox="0 0 8.2 7.7"><circle cx="4.1" cy="3.85" r="3.6" fill="none" stroke="#444" stroke-width="0.75"/><path d="M2.4 2.15L5.8 5.55M5.8 2.15L2.4 5.55" stroke="#444" stroke-width="0.75"/></svg>
<div class="a" style="left:55.3px;top:291.95px;width:23.8px;height:22.0px;background:#fff"></div>
<div class="a" style="left:81px;top:291.95px;width:513.6px;height:22.0px;background:#fff"></div>
<div class="a" style="left:596.9px;top:291.95px;width:57.9px;height:22.0px;background:#fff"></div>
<svg style="left:62px;top:297.35px" width="10.5" height="12.5" viewBox="0 0 10.5 12.5"><path d="M5.1 0.5L9.2 2.8V7.8M5.1 0.5L1 2.8V7.8L2.1 8.6M1 2.8L5.1 5.1 9.2 2.8M5.1 5.1V8.4M3.05 1.65L7.15 3.95M4.1 1.05L8.2 3.35" fill="none" stroke="#4d4d4d" stroke-width="0.7" stroke-linejoin="round"/><path d="M5.8 9.3A1.05 1.2 0 1 0 5.8 11.1" fill="none" stroke="#555" stroke-width="0.6"/><path d="M7.6 9V11.4H8.4A0.62 0.6 0 0 0 8.4 10.2H7.6M7.6 10.2H8.3A0.6 0.6 0 0 0 8.3 9H7.6" fill="none" stroke="#555" stroke-width="0.55"/></svg>
<div class="t" style="left:85.6px;top:300px;font-size:6.3px;font-weight:normal;color:#333">10.07.2025</div>
<div class="t" style="left:170.9px;top:300px;font-size:6.3px;font-weight:bold;color:#151515;transform:scaleX(0.99);transform-origin:0 0">DO00012963</div>
<div class="t" style="left:256px;top:300px;font-size:6.5px;font-weight:normal;color:#333">-</div>
<div class="t" style="left:342px;top:300px;font-size:6.3px;font-weight:normal;color:#2b2b2b;transform:scaleX(0.97);transform-origin:0 0;-webkit-text-stroke:0.1px #2b2b2b">Rene Schneider (E500461)</div>
<div class="t" style="right:295.5px;top:300px;font-size:6.3px;font-weight:normal;color:#2b2b2b;transform:scaleX(0.96);transform-origin:100% 0;-webkit-text-stroke:0.1px #2b2b2b">2'400.00 CHF</div>
<div class="a" style="left:512.5px;top:300.30px;width:5px;height:5px;border-radius:50%;background:#3d7ef0"></div>
<div class="t" style="left:518.8px;top:300px;font-size:6.3px;font-weight:normal;color:#2b2b2b;-webkit-text-stroke:0.13px #2b2b2b">Bearbeitet</div>
<svg style="left:601.3px;top:299px" width="8" height="7" viewBox="0 0 8 7"><path d="M0.3 3.5H3" fill="none" stroke="#555" stroke-width="0.7"/><path d="M2.2 2.1L4.1 3.5 2.2 4.9z" fill="#444"/><path d="M4.9 1.5H7.6M4.9 3.5H7.6M4.9 5.5H7.6" stroke="#7a7a7a" stroke-width="0.65"/></svg>
<svg style="left:620.5px;top:297.95px" width="9" height="8.5" viewBox="0 0 9 8.5"><path d="M3.6 0.7L6.5 2.3V5M3.6 0.7L0.7 2.3V5.6L3.6 7.2M0.7 2.3L3.6 3.9 6.5 2.3M3.6 3.9V7.2" fill="none" stroke="#666" stroke-width="0.6" stroke-linejoin="round"/><path d="M7.3 5.7V7.9M6.2 6.8H8.4" stroke="#666" stroke-width="0.6"/></svg>
<svg style="left:641.3px;top:299.45px" width="8.2" height="7.7" viewBox="0 0 8.2 7.7"><circle cx="4.1" cy="3.85" r="3.6" fill="none" stroke="#444" stroke-width="0.75"/><path d="M2.4 2.15L5.8 5.55M5.8 2.15L2.4 5.55" stroke="#444" stroke-width="0.75"/></svg>
<div class="a" style="left:55.3px;top:317.10px;width:23.8px;height:22.0px;background:#fff"></div>
<div class="a" style="left:81px;top:317.10px;width:513.6px;height:22.0px;background:#fff"></div>
<div class="a" style="left:596.9px;top:317.10px;width:57.9px;height:22.0px;background:#fff"></div>
<svg style="left:62px;top:322.50px" width="10.5" height="12.5" viewBox="0 0 10.5 12.5"><path d="M5.1 0.5L9.2 2.8V7.8M5.1 0.5L1 2.8V7.8L2.1 8.6M1 2.8L5.1 5.1 9.2 2.8M5.1 5.1V8.4M3.05 1.65L7.15 3.95M4.1 1.05L8.2 3.35" fill="none" stroke="#4d4d4d" stroke-width="0.7" stroke-linejoin="round"/><path d="M5.8 9.3A1.05 1.2 0 1 0 5.8 11.1" fill="none" stroke="#555" stroke-width="0.6"/><path d="M7.6 9V11.4H8.4A0.62 0.6 0 0 0 8.4 10.2H7.6M7.6 10.2H8.3A0.6 0.6 0 0 0 8.3 9H7.6" fill="none" stroke="#555" stroke-width="0.55"/></svg>
<div class="t" style="left:85.6px;top:325px;font-size:6.3px;font-weight:normal;color:#333">10.07.2025</div>
<div class="t" style="left:170.9px;top:325px;font-size:6.3px;font-weight:bold;color:#151515;transform:scaleX(0.99);transform-origin:0 0">DO00012962</div>
<div class="t" style="left:256px;top:325px;font-size:6.5px;font-weight:normal;color:#333">-</div>
<div class="t" style="left:342px;top:325px;font-size:6.3px;font-weight:normal;color:#2b2b2b;transform:scaleX(0.97);transform-origin:0 0;-webkit-text-stroke:0.1px #2b2b2b">Rene Schneider (E500461)</div>
<div class="t" style="right:295.5px;top:325px;font-size:6.3px;font-weight:normal;color:#2b2b2b;transform:scaleX(0.96);transform-origin:100% 0;-webkit-text-stroke:0.1px #2b2b2b">1'600.00 CHF</div>
<div class="a" style="left:512.5px;top:325.45px;width:5px;height:5px;border-radius:50%;background:#3d7ef0"></div>
<div class="t" style="left:518.8px;top:325px;font-size:6.3px;font-weight:normal;color:#2b2b2b;transform:scaleX(0.974);transform-origin:0 0;-webkit-text-stroke:0.13px #2b2b2b">Erstellt, Genehmigung a...</div>
<svg style="left:601.3px;top:324px" width="8" height="7" viewBox="0 0 8 7"><path d="M0.3 3.5H3" fill="none" stroke="#555" stroke-width="0.7"/><path d="M2.2 2.1L4.1 3.5 2.2 4.9z" fill="#444"/><path d="M4.9 1.5H7.6M4.9 3.5H7.6M4.9 5.5H7.6" stroke="#7a7a7a" stroke-width="0.65"/></svg>
<svg style="left:620.5px;top:323.10px" width="9" height="8.5" viewBox="0 0 9 8.5"><path d="M3.6 0.7L6.5 2.3V5M3.6 0.7L0.7 2.3V5.6L3.6 7.2M0.7 2.3L3.6 3.9 6.5 2.3M3.6 3.9V7.2" fill="none" stroke="#666" stroke-width="0.6" stroke-linejoin="round"/><path d="M7.3 5.7V7.9M6.2 6.8H8.4" stroke="#666" stroke-width="0.6"/></svg>
<svg style="left:641.3px;top:324.60px" width="8.2" height="7.7" viewBox="0 0 8.2 7.7"><circle cx="4.1" cy="3.85" r="3.6" fill="none" stroke="#444" stroke-width="0.75"/><path d="M2.4 2.15L5.8 5.55M5.8 2.15L2.4 5.55" stroke="#444" stroke-width="0.75"/></svg>
<div class="a" style="left:55.3px;top:342.25px;width:23.8px;height:22.0px;background:#fff"></div>
<div class="a" style="left:81px;top:342.25px;width:513.6px;height:22.0px;background:#fff"></div>
<div class="a" style="left:596.9px;top:342.25px;width:57.9px;height:22.0px;background:#fff"></div>
<svg style="left:62px;top:347.65px" width="10.5" height="12.5" viewBox="0 0 10.5 12.5"><path d="M5.1 0.5L9.2 2.8V7.8M5.1 0.5L1 2.8V7.8L2.1 8.6M1 2.8L5.1 5.1 9.2 2.8M5.1 5.1V8.4M3.05 1.65L7.15 3.95M4.1 1.05L8.2 3.35" fill="none" stroke="#4d4d4d" stroke-width="0.7" stroke-linejoin="round"/><path d="M5.8 9.3A1.05 1.2 0 1 0 5.8 11.1" fill="none" stroke="#555" stroke-width="0.6"/><path d="M7.6 9V11.4H8.4A0.62 0.6 0 0 0 8.4 10.2H7.6M7.6 10.2H8.3A0.6 0.6 0 0 0 8.3 9H7.6" fill="none" stroke="#555" stroke-width="0.55"/></svg>
<div class="t" style="left:85.6px;top:351px;font-size:6.3px;font-weight:normal;color:#333">09.07.2025</div>
<div class="t" style="left:170.9px;top:351px;font-size:6.3px;font-weight:bold;color:#151515;transform:scaleX(0.99);transform-origin:0 0">DO00012961</div>
<div class="t" style="left:256px;top:351px;font-size:6.5px;font-weight:normal;color:#333">-</div>
<div class="t" style="left:342px;top:351px;font-size:6.3px;font-weight:normal;color:#2b2b2b;transform:scaleX(0.97);transform-origin:0 0;-webkit-text-stroke:0.1px #2b2b2b">Rene Schneider (E500461)</div>
<div class="t" style="right:295.5px;top:351px;font-size:6.3px;font-weight:normal;color:#2b2b2b;transform:scaleX(0.96);transform-origin:100% 0;-webkit-text-stroke:0.1px #2b2b2b">1'747.80 CHF</div>
<div class="a" style="left:512.5px;top:350.60px;width:5px;height:5px;border-radius:50%;background:#3d7ef0"></div>
<div class="t" style="left:518.8px;top:351px;font-size:6.3px;font-weight:normal;color:#2b2b2b;-webkit-text-stroke:0.13px #2b2b2b">Bearbeitet</div>
<svg style="left:601.3px;top:349px" width="8" height="7" viewBox="0 0 8 7"><path d="M0.3 3.5H3" fill="none" stroke="#555" stroke-width="0.7"/><path d="M2.2 2.1L4.1 3.5 2.2 4.9z" fill="#444"/><path d="M4.9 1.5H7.6M4.9 3.5H7.6M4.9 5.5H7.6" stroke="#7a7a7a" stroke-width="0.65"/></svg>
<svg style="left:620.5px;top:348.25px" width="9" height="8.5" viewBox="0 0 9 8.5"><path d="M3.6 0.7L6.5 2.3V5M3.6 0.7L0.7 2.3V5.6L3.6 7.2M0.7 2.3L3.6 3.9 6.5 2.3M3.6 3.9V7.2" fill="none" stroke="#666" stroke-width="0.6" stroke-linejoin="round"/><path d="M7.3 5.7V7.9M6.2 6.8H8.4" stroke="#666" stroke-width="0.6"/></svg>
<svg style="left:641.3px;top:349.75px" width="8.2" height="7.7" viewBox="0 0 8.2 7.7"><circle cx="4.1" cy="3.85" r="3.6" fill="none" stroke="#444" stroke-width="0.75"/><path d="M2.4 2.15L5.8 5.55M5.8 2.15L2.4 5.55" stroke="#444" stroke-width="0.75"/></svg>
<div class="a" style="left:55.3px;top:367.40px;width:23.8px;height:22.0px;background:#fff"></div>
<div class="a" style="left:81px;top:367.40px;width:513.6px;height:22.0px;background:#fff"></div>
<div class="a" style="left:596.9px;top:367.40px;width:57.9px;height:22.0px;background:#fff"></div>
<svg style="left:62px;top:372.80px" width="10.5" height="12.5" viewBox="0 0 10.5 12.5"><path d="M5.1 0.5L9.2 2.8V7.8M5.1 0.5L1 2.8V7.8L2.1 8.6M1 2.8L5.1 5.1 9.2 2.8M5.1 5.1V8.4M3.05 1.65L7.15 3.95M4.1 1.05L8.2 3.35" fill="none" stroke="#4d4d4d" stroke-width="0.7" stroke-linejoin="round"/><path d="M5.8 9.3A1.05 1.2 0 1 0 5.8 11.1" fill="none" stroke="#555" stroke-width="0.6"/><path d="M7.6 9V11.4H8.4A0.62 0.6 0 0 0 8.4 10.2H7.6M7.6 10.2H8.3A0.6 0.6 0 0 0 8.3 9H7.6" fill="none" stroke="#555" stroke-width="0.55"/></svg>
<div class="t" style="left:85.6px;top:376px;font-size:6.3px;font-weight:normal;color:#333">09.07.2025</div>
<div class="t" style="left:170.9px;top:376px;font-size:6.3px;font-weight:bold;color:#151515;transform:scaleX(0.99);transform-origin:0 0">DO00012960</div>
<div class="t" style="left:256px;top:376px;font-size:6.5px;font-weight:normal;color:#333">-</div>
<div class="t" style="left:342px;top:376px;font-size:6.3px;font-weight:normal;color:#2b2b2b;transform:scaleX(0.97);transform-origin:0 0;-webkit-text-stroke:0.1px #2b2b2b">Rene Schneider (E500461)</div>
<div class="t" style="right:295.5px;top:376px;font-size:6.3px;font-weight:normal;color:#2b2b2b;transform:scaleX(0.96);transform-origin:100% 0;-webkit-text-stroke:0.1px #2b2b2b">1'600.00 CHF</div>
<div class="a" style="left:512.5px;top:375.75px;width:5px;height:5px;border-radius:50%;background:#3d7ef0"></div>
<div class="t" style="left:518.8px;top:376px;font-size:6.3px;font-weight:normal;color:#2b2b2b;-webkit-text-stroke:0.13px #2b2b2b">Bearbeitet</div>
<svg style="left:601.3px;top:374px" width="8" height="7" viewBox="0 0 8 7"><path d="M0.3 3.5H3" fill="none" stroke="#555" stroke-width="0.7"/><path d="M2.2 2.1L4.1 3.5 2.2 4.9z" fill="#444"/><path d="M4.9 1.5H7.6M4.9 3.5H7.6M4.9 5.5H7.6" stroke="#7a7a7a" stroke-width="0.65"/></svg>
<svg style="left:620.5px;top:373.40px" width="9" height="8.5" viewBox="0 0 9 8.5"><path d="M3.6 0.7L6.5 2.3V5M3.6 0.7L0.7 2.3V5.6L3.6 7.2M0.7 2.3L3.6 3.9 6.5 2.3M3.6 3.9V7.2" fill="none" stroke="#666" stroke-width="0.6" stroke-linejoin="round"/><path d="M7.3 5.7V7.9M6.2 6.8H8.4" stroke="#666" stroke-width="0.6"/></svg>
<svg style="left:641.3px;top:374.90px" width="8.2" height="7.7" viewBox="0 0 8.2 7.7"><circle cx="4.1" cy="3.85" r="3.6" fill="none" stroke="#444" stroke-width="0.75"/><path d="M2.4 2.15L5.8 5.55M5.8 2.15L2.4 5.55" stroke="#444" stroke-width="0.75"/></svg>
<div class="a" style="left:55.3px;top:392.55px;width:23.8px;height:19.9px;background:#fff"></div>
<div class="a" style="left:81px;top:392.55px;width:513.6px;height:19.9px;background:#fff"></div>
<div class="a" style="left:596.9px;top:392.55px;width:57.9px;height:19.9px;background:#fff"></div>
<svg style="left:62px;top:397.95px" width="10.5" height="12.5" viewBox="0 0 10.5 12.5"><path d="M5.1 0.5L9.2 2.8V7.8M5.1 0.5L1 2.8V7.8L2.1 8.6M1 2.8L5.1 5.1 9.2 2.8M5.1 5.1V8.4M3.05 1.65L7.15 3.95M4.1 1.05L8.2 3.35" fill="none" stroke="#4d4d4d" stroke-width="0.7" stroke-linejoin="round"/><path d="M5.8 9.3A1.05 1.2 0 1 0 5.8 11.1" fill="none" stroke="#555" stroke-width="0.6"/><path d="M7.6 9V11.4H8.4A0.62 0.6 0 0 0 8.4 10.2H7.6M7.6 10.2H8.3A0.6 0.6 0 0 0 8.3 9H7.6" fill="none" stroke="#555" stroke-width="0.55"/></svg>
<div class="t" style="left:85.6px;top:401px;font-size:6.3px;font-weight:normal;color:#333">09.07.2025</div>
<div class="t" style="left:170.9px;top:401px;font-size:6.3px;font-weight:bold;color:#151515;transform:scaleX(0.99);transform-origin:0 0">DO00012959</div>
<div class="t" style="left:256px;top:401px;font-size:6.5px;font-weight:normal;color:#333">-</div>
<div class="t" style="left:342px;top:401px;font-size:6.3px;font-weight:normal;color:#2b2b2b;transform:scaleX(0.97);transform-origin:0 0;-webkit-text-stroke:0.1px #2b2b2b">Rene Schneider (E500461)</div>
<div class="t" style="right:295.5px;top:401px;font-size:6.3px;font-weight:normal;color:#2b2b2b;transform:scaleX(0.96);transform-origin:100% 0;-webkit-text-stroke:0.1px #2b2b2b">800.00 CHF</div>
<div class="a" style="left:512.5px;top:400.90px;width:5px;height:5px;border-radius:50%;background:#3d7ef0"></div>
<div class="t" style="left:518.8px;top:401px;font-size:6.3px;font-weight:normal;color:#2b2b2b;-webkit-text-stroke:0.13px #2b2b2b">Bearbeitet</div>
<svg style="left:601.3px;top:400px" width="8" height="7" viewBox="0 0 8 7"><path d="M0.3 3.5H3" fill="none" stroke="#555" stroke-width="0.7"/><path d="M2.2 2.1L4.1 3.5 2.2 4.9z" fill="#444"/><path d="M4.9 1.5H7.6M4.9 3.5H7.6M4.9 5.5H7.6" stroke="#7a7a7a" stroke-width="0.65"/></svg>
<svg style="left:620.5px;top:398.55px" width="9" height="8.5" viewBox="0 0 9 8.5"><path d="M3.6 0.7L6.5 2.3V5M3.6 0.7L0.7 2.3V5.6L3.6 7.2M0.7 2.3L3.6 3.9 6.5 2.3M3.6 3.9V7.2" fill="none" stroke="#666" stroke-width="0.6" stroke-linejoin="round"/><path d="M7.3 5.7V7.9M6.2 6.8H8.4" stroke="#666" stroke-width="0.6"/></svg>
<svg style="left:641.3px;top:400.05px" width="8.2" height="7.7" viewBox="0 0 8.2 7.7"><circle cx="4.1" cy="3.85" r="3.6" fill="none" stroke="#444" stroke-width="0.75"/><path d="M2.4 2.15L5.8 5.55M5.8 2.15L2.4 5.55" stroke="#444" stroke-width="0.75"/></svg>
<svg style="left:656.5px;top:116.5px" width="3" height="2" viewBox="0 0 3 2"><path d="M0.2 1.8L1.5 0.3 2.8 1.8z" fill="#777"/></svg>
<div class="a" style="left:656.6px;top:121px;width:2.7px;height:105.7px;background:#8a8a8a;border-radius:1.35px"></div>
<svg style="left:656.5px;top:410px" width="3" height="2" viewBox="0 0 3 2"><path d="M0.2 0.2L1.5 1.7 2.8 0.2z" fill="#777"/></svg>
<svg style="left:0;top:0" width="800" height="419" viewBox="0 0 800 419"><line x1="700.1" y1="136.65" x2="615.23" y2="152.49" stroke="#fa0a0a" stroke-width="1.45" stroke-linecap="round"/><path d="M610.9 153.3L614.86 150.53L615.59 154.46z" fill="#fa0a0a"/><line x1="726.4" y1="165.5" x2="622.76" y2="178.93" stroke="#fa0a0a" stroke-width="1.45" stroke-linecap="round"/><path d="M618.4 179.5L622.51 176.95L623.02 180.92z" fill="#fa0a0a"/><line x1="701.5" y1="242.5" x2="612.13" y2="251.79" stroke="#fa0a0a" stroke-width="1.45" stroke-linecap="round"/><path d="M607.75 252.25L611.92 249.81L612.33 253.78z" fill="#fa0a0a"/><line x1="734.7" y1="293.7" x2="616.26" y2="277.79" stroke="#fa0a0a" stroke-width="1.45" stroke-linecap="round"/><path d="M611.9 277.2L616.53 275.80L615.99 279.77z" fill="#fa0a0a"/><line x1="713.3" y1="356.7" x2="613.20" y2="354.40" stroke="#fa0a0a" stroke-width="1.45" stroke-linecap="round"/><path d="M608.8 354.3L613.24 352.40L613.15 356.40z" fill="#fa0a0a"/></svg>
</body></html>
